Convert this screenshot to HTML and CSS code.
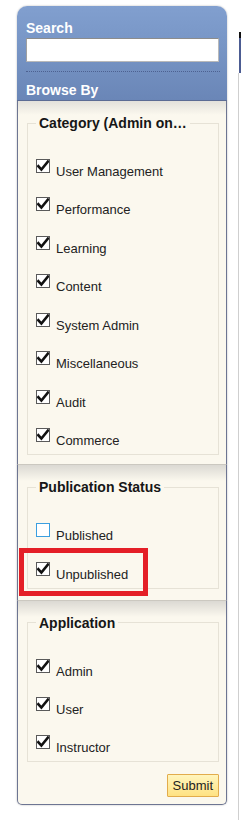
FILE: index.html
```html
<!DOCTYPE html>
<html lang="en">
<head>
    <meta charset="UTF-8">
    <meta name="viewport" content="width=device-width, initial-scale=1.0">
    <title>Browse Filters</title>
    <link rel="stylesheet" href="styles.css">
</head>
<body>
    <div class="page">
        <!-- Filter sidebar -->
        <aside class="filters">
            <div class="filters-head">
                <label class="head-label" for="search">Search</label>
                <input class="search-input" id="search" type="text">
                <div class="head-rule"></div>
                <div class="head-label">Browse By</div>
            </div>

            <div class="filter-section first">
                <fieldset class="filter-group">
                    <legend>Category (Admin on…</legend>
                    <label class="opt"><span class="box checked"><svg viewBox="0 0 12 12"><path d="M1.3 6.2 4.4 9.6 10.9 1.6"/></svg></span><span class="opt-text">User Management</span></label>
                    <label class="opt"><span class="box checked"><svg viewBox="0 0 12 12"><path d="M1.3 6.2 4.4 9.6 10.9 1.6"/></svg></span><span class="opt-text">Performance</span></label>
                    <label class="opt"><span class="box checked"><svg viewBox="0 0 12 12"><path d="M1.3 6.2 4.4 9.6 10.9 1.6"/></svg></span><span class="opt-text">Learning</span></label>
                    <label class="opt"><span class="box checked"><svg viewBox="0 0 12 12"><path d="M1.3 6.2 4.4 9.6 10.9 1.6"/></svg></span><span class="opt-text">Content</span></label>
                    <label class="opt"><span class="box checked"><svg viewBox="0 0 12 12"><path d="M1.3 6.2 4.4 9.6 10.9 1.6"/></svg></span><span class="opt-text">System Admin</span></label>
                    <label class="opt"><span class="box checked"><svg viewBox="0 0 12 12"><path d="M1.3 6.2 4.4 9.6 10.9 1.6"/></svg></span><span class="opt-text">Miscellaneous</span></label>
                    <label class="opt"><span class="box checked"><svg viewBox="0 0 12 12"><path d="M1.3 6.2 4.4 9.6 10.9 1.6"/></svg></span><span class="opt-text">Audit</span></label>
                    <label class="opt"><span class="box checked"><svg viewBox="0 0 12 12"><path d="M1.3 6.2 4.4 9.6 10.9 1.6"/></svg></span><span class="opt-text">Commerce</span></label>
                </fieldset>
            </div>

            <div class="filter-section">
                <fieldset class="filter-group">
                    <legend>Publication Status</legend>
                    <label class="opt"><span class="box focused"></span><span class="opt-text">Published</span></label>
                    <label class="opt marked"><span class="box checked"><svg viewBox="0 0 12 12"><path d="M1.3 6.2 4.4 9.6 10.9 1.6"/></svg></span><span class="opt-text">Unpublished</span><span class="highlight"></span></label>
                </fieldset>
            </div>

            <div class="filter-section last">
                <fieldset class="filter-group">
                    <legend>Application</legend>
                    <label class="opt"><span class="box checked"><svg viewBox="0 0 12 12"><path d="M1.3 6.2 4.4 9.6 10.9 1.6"/></svg></span><span class="opt-text">Admin</span></label>
                    <label class="opt"><span class="box checked"><svg viewBox="0 0 12 12"><path d="M1.3 6.2 4.4 9.6 10.9 1.6"/></svg></span><span class="opt-text">User</span></label>
                    <label class="opt"><span class="box checked"><svg viewBox="0 0 12 12"><path d="M1.3 6.2 4.4 9.6 10.9 1.6"/></svg></span><span class="opt-text">Instructor</span></label>
                </fieldset>
                <div class="actions">
                    <button class="submit-btn" type="button">Submit</button>
                </div>
            </div>
        </aside>

        <!-- Main content (cut off at the right edge) -->
        <main class="content">
            <div class="content-bar"></div>
            <div class="content-body"></div>
        </main>
    </div>
</body>
</html>
```

FILE: styles.css
```css
html, body {
    margin: 0;
    padding: 0;
    background: #fff;
    overflow: hidden;
}

body {
    font-family: "Liberation Sans", Arial, sans-serif;
    font-size: 13px;
    color: #222;
}

.page {
    display: flex;
    align-items: flex-start;
    padding: 6px 0 0 17px;
    height: 814px;
}

/* Sidebar */
.filters {
    width: 210px;
    flex-shrink: 0;
    border-radius: 10px 10px 5px 5px;
    box-shadow: 0 0 2px rgba(0, 0, 0, 0.3);
}

.filters-head {
    background: linear-gradient(to bottom, #819fcf 0%, #7896c6 40%, #6a86b7 100%);
    border-radius: 10px 10px 0 0;
    border-bottom: 1px solid #5c6c94;
    padding: 14px 7px 2px 9px;
}

.head-label {
    display: block;
    font-weight: bold;
    font-size: 14px;
    line-height: 16px;
    color: #fff;
}

.search-input {
    display: block;
    box-sizing: border-box;
    width: 193px;
    height: 24px;
    margin: 2px 0 0;
    padding: 2px 4px;
    border: 1px solid #b9b9b9;
    border-top-color: #8c8c8c;
    border-left-color: #a0a0a0;
    background: #fff;
    font-family: inherit;
    font-size: 13px;
}

.head-rule {
    margin: 9px 0 10px;
    height: 0;
    border-top: 1px dotted #4d6190;
}

.filter-section {
    border-left: 1px solid #6d7592;
    border-right: 1px solid #6d7592;
    border-top: 1px solid #cbc8c0;
    background: linear-gradient(to bottom, #dbd9d3 0, #fbf8ee 16px);
    padding: 14px 7px 11px 9px;
}

.filter-section.first {
    border-top: none;
    padding-bottom: 9px;
    background: linear-gradient(to bottom, #e3e1db 0, #fbf8ee 14px);
}

.filter-section.last {
    border-bottom: 1px solid #6d7592;
    border-radius: 0 0 5px 5px;
    padding-bottom: 7px;
}

.filter-group {
    margin: 0;
    min-width: 0;
    padding: 28px 8px 5px;
    border: 1px solid #e6e2d6;
}

.filter-group legend {
    padding: 0 3px;
    font-weight: bold;
    font-size: 14px;
    line-height: 16px;
    color: #161616;
    white-space: nowrap;
}

/* Checkbox rows */
.opt {
    display: flex;
    align-items: flex-start;
    height: 21px;
    cursor: pointer;
}

.opt + .opt {
    margin-top: 17.45px;
}

.box {
    box-sizing: border-box;
    width: 14px;
    height: 14px;
    flex-shrink: 0;
    border: 1px solid #5a5a5a;
    background: #fff;
}

.box svg {
    display: block;
    width: 12px;
    height: 12px;
}

.box svg path {
    fill: none;
    stroke: #111;
    stroke-width: 2.6;
    stroke-linecap: square;
    stroke-linejoin: miter;
}

.box.focused {
    border-color: #3b9fe0;
}

.opt-text {
    margin-left: 6px;
    padding-top: 5px;
    line-height: 15px;
    font-size: 13px;
    color: #222;
}

.marked {
    position: relative;
}

.highlight {
    position: absolute;
    left: -17px;
    top: -14px;
    width: 129px;
    height: 48px;
    box-sizing: border-box;
    border: 5px solid #e41f27;
}

.actions {
    display: flex;
    justify-content: flex-end;
    margin-top: 12px;
}

.submit-btn {
    height: 23px;
    padding: 0 5px;
    border: 1px solid #e2ac4c;
    border-radius: 1px;
    background: linear-gradient(to bottom, #fff5bd 0%, #ffe283 100%);
    font-family: inherit;
    font-size: 13px;
    color: #222;
    cursor: pointer;
}

/* Main area, only its left edge is visible */
.content {
    flex: 1;
    min-width: 0;
    margin-left: 11px;
    margin-top: 26px;
    display: flex;
    flex-direction: column;
    height: 788px;
}

.content-bar {
    margin-left: 1px;
    height: 35px;
    border-top: 6px solid #111;
    background: #4c5c92;
}

.content-body {
    flex: 1;
    border-left: 1px solid #cfcfcf;
}
```
